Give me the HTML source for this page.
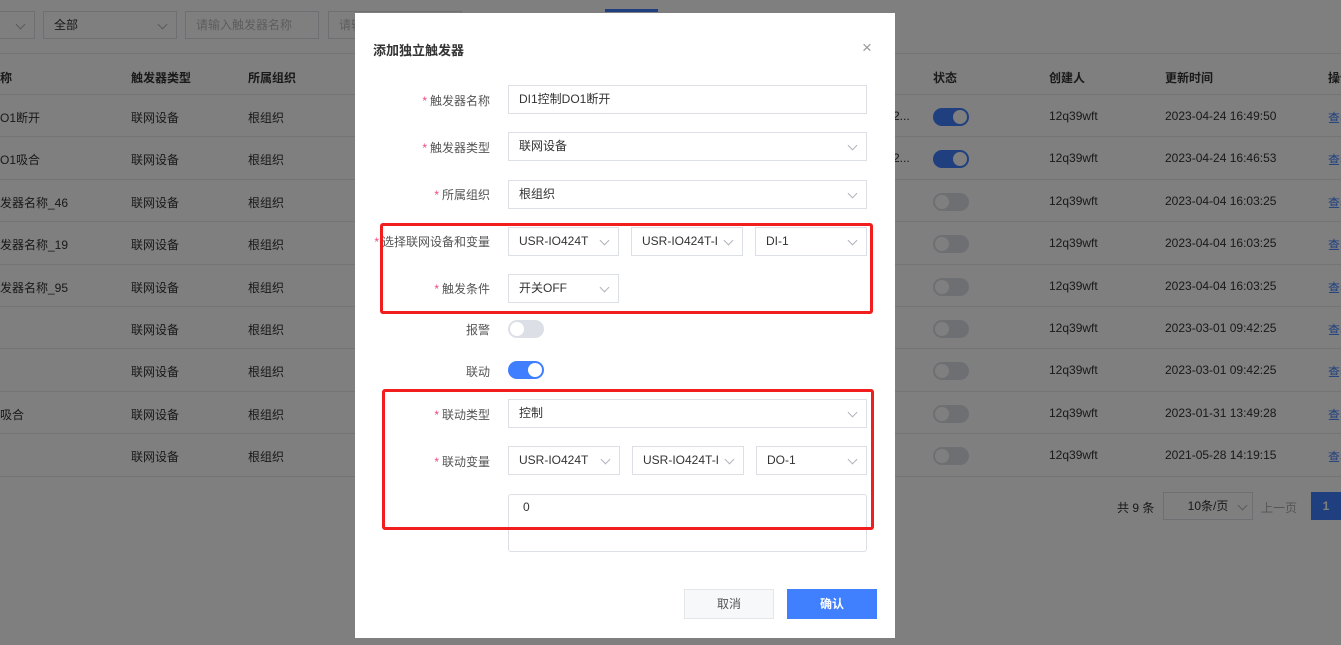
<!DOCTYPE html>
<html><head><meta charset="utf-8"><style>
*{box-sizing:border-box;margin:0;padding:0}
body{width:1341px;height:645px;overflow:hidden;position:relative;background:#fff;font-family:"Liberation Sans","Noto Sans CJK SC",sans-serif;font-size:12px;color:#333}
.a{position:absolute;white-space:nowrap}
.sel{position:absolute;border:1px solid #dcdfe6;background:#fff;height:28px;line-height:26px;padding-left:10px;font-size:12px;color:#333;white-space:nowrap}
.chev{position:absolute;right:10px;top:9px;width:7px;height:7px;border-right:1px solid #b0b4bc;border-bottom:1px solid #b0b4bc;transform:rotate(45deg)}
.row{position:absolute;left:0;width:1341px;height:42.4px;border-bottom:1px solid #e8e8e8}
.row span{position:absolute;top:14px;font-size:12px;color:#333;white-space:nowrap}
.tg{position:absolute;width:36px;height:18px;border-radius:9px}
.tg::after{content:"";position:absolute;top:2px;width:14px;height:14px;border-radius:50%;background:#fff}
.on{background:#3e7eff}.on::after{right:2px}
.off{background:#dcdfe6}.off::after{left:2px}
.lbl{position:absolute;right:851px;font-size:12px;color:#555;text-align:right;white-space:nowrap}
.lbl i{color:#f5467a;font-style:normal;margin-right:3px}
.red{position:absolute;border:3px solid #f21d1d;border-radius:3px}
</style></head><body>
<div class="sel" style="left:-5px;top:11px;width:40px;"><div class="chev"></div></div>
<div class="sel" style="left:43px;top:11px;width:134px;">全部<div class="chev"></div></div>
<div class="sel" style="left:185px;top:11px;width:134px;color:#bbb">请输入触发器名称</div>
<div class="sel" style="left:328px;top:11px;width:134px;color:#bbb">请输</div>
<div class="a" style="left:605px;top:9px;width:53px;height:3px;background:#3e7eff"></div>
<div class="row" style="top:53px;border-top:1px solid #e8e8e8;font-weight:bold">
<span style="left:0;top:15px">称</span><span style="left:131px;top:15px">触发器类型</span><span style="left:248px;top:15px">所属组织</span><span style="left:933px;top:15px">状态</span><span style="left:1049px;top:15px">创建人</span><span style="left:1165px;top:15px">更新时间</span><span style="left:1328px;top:15px">操作</span></div>
<div id="rows"></div>
<script>
var d=[["O1断开",1,"2023-04-24 16:49:50","2..."],["O1吸合",1,"2023-04-24 16:46:53","2..."],["发器名称_46",0,"2023-04-04 16:03:25",""],["发器名称_19",0,"2023-04-04 16:03:25",""],["发器名称_95",0,"2023-04-04 16:03:25",""],["",0,"2023-03-01 09:42:25",""],["",0,"2023-03-01 09:42:25",""],["吸合",0,"2023-01-31 13:49:28",""],["",0,"2021-05-28 14:19:15",""]];
var h="";d.forEach(function(r,i){var t=95+i*42.4;h+='<div class="row" style="top:'+t+'px"><span style="left:0">'+r[0]+'</span><span style="left:131px">联网设备</span><span style="left:248px">根组织</span><span style="left:893px">'+r[3]+'</span><div class="tg '+(r[1]?'on':'off')+'" style="left:933px;top:13px"></div><span style="left:1049px">12q39wft</span><span style="left:1165px">'+r[2]+'</span><span style="left:1328px;color:#3e7eff">查看</span></div>';});
document.getElementById("rows").innerHTML=h;
</script>
<div class="a" style="left:1117px;top:499px;color:#333">共 9 条</div>
<div class="sel" style="left:1163px;top:492px;width:90px;text-align:center;padding:0;color:#333">10条/页<div class="chev" style="right:6px;"></div></div>
<div class="a" style="left:1261px;top:499px;color:#aaa">上一页</div>
<div class="a" style="left:1311px;top:492px;width:30px;height:28px;background:#3e7eff;color:#fff;text-align:center;line-height:28px;font-weight:bold">1</div>
<div class="a" style="left:0;top:0;width:1341px;height:645px;background:rgba(0,0,0,.5)"></div>
<div class="a" style="left:355px;top:13px;width:540px;height:625px;background:#fff">
<div class="a" style="left:18px;top:27px;font-size:13px;font-weight:bold;color:#333">添加独立触发器</div>
<div class="a" style="left:507px;top:25px;font-size:17px;color:#999">×</div>
</div>
<div class="lbl" style="top:92px"><i>*</i>触发器名称</div>
<div class="sel" style="left:508px;top:85px;width:359px;height:29px">DI1控制DO1断开</div>
<div class="lbl" style="top:139px"><i>*</i>触发器类型</div>
<div class="sel" style="left:508px;top:132px;width:359px;height:29px">联网设备<div class="chev"></div></div>
<div class="lbl" style="top:186px"><i>*</i>所属组织</div>
<div class="sel" style="left:508px;top:180px;width:359px;height:29px">根组织<div class="chev"></div></div>
<div class="lbl" style="top:233px"><i>*</i>选择联网设备和变量</div>
<div class="sel" style="left:508px;top:227px;width:111px;height:29px">USR-IO424T<div class="chev"></div></div>
<div class="sel" style="left:631px;top:227px;width:112px;height:29px">USR-IO424T-I<div class="chev"></div></div>
<div class="sel" style="left:755px;top:227px;width:112px;height:29px">DI-1<div class="chev"></div></div>
<div class="lbl" style="top:280px"><i>*</i>触发条件</div>
<div class="sel" style="left:508px;top:274px;width:111px;height:29px">开关OFF<div class="chev"></div></div>
<div class="lbl" style="top:321px">报警</div>
<div class="tg off" style="left:508px;top:320px"></div>
<div class="lbl" style="top:363px">联动</div>
<div class="tg on" style="left:508px;top:361px"></div>
<div class="lbl" style="top:406px"><i>*</i>联动类型</div>
<div class="sel" style="left:508px;top:399px;width:359px;height:29px">控制<div class="chev"></div></div>
<div class="lbl" style="top:453px"><i>*</i>联动变量</div>
<div class="sel" style="left:508px;top:446px;width:112px;height:29px">USR-IO424T<div class="chev"></div></div>
<div class="sel" style="left:632px;top:446px;width:112px;height:29px">USR-IO424T-I<div class="chev"></div></div>
<div class="sel" style="left:756px;top:446px;width:111px;height:29px">DO-1<div class="chev"></div></div>
<div class="sel" style="left:508px;top:494px;width:359px;height:58px;border-radius:3px;line-height:24px;padding-left:14px">0</div>
<div class="a" style="left:684px;top:589px;width:90px;height:30px;border:1px solid #e4e6eb;background:#f7f8fa;text-align:center;line-height:28px;color:#555">取消</div>
<div class="a" style="left:787px;top:589px;width:90px;height:30px;background:#4080ff;text-align:center;line-height:30px;color:#fff;font-weight:bold">确认</div>
<div class="red" style="left:380px;top:223px;width:493px;height:91px"></div>
<div class="red" style="left:382px;top:389px;width:492px;height:141px"></div>
</body></html>
